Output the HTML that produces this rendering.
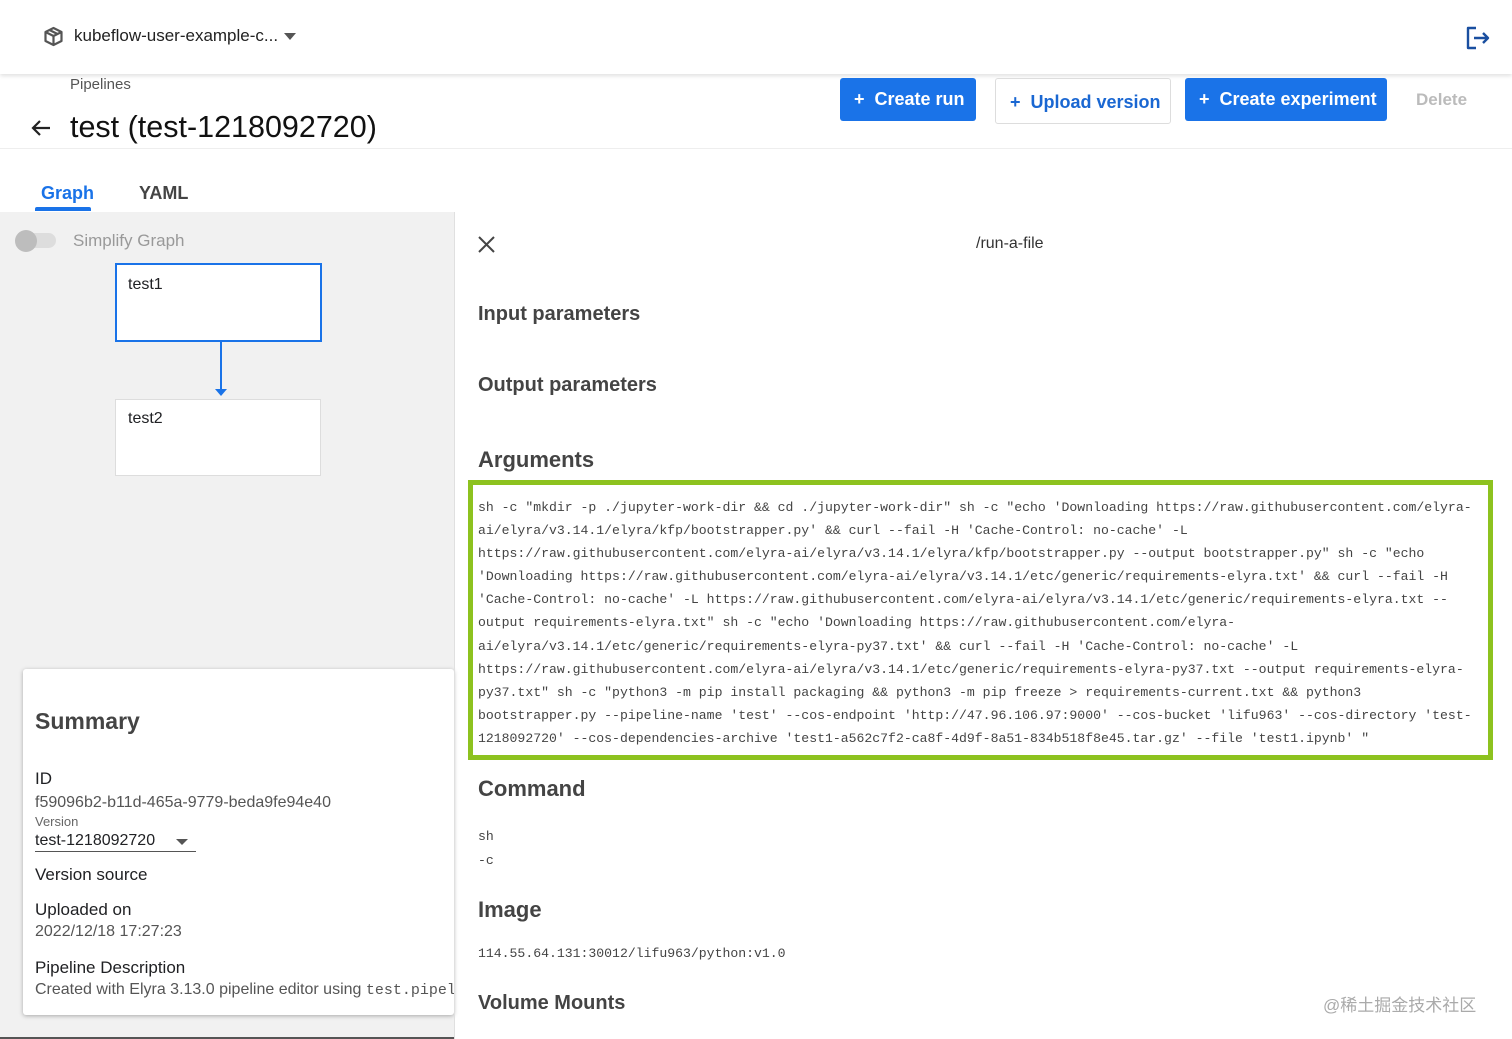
<!DOCTYPE html>
<html><head><meta charset="utf-8"><style>
*{box-sizing:border-box;margin:0;padding:0}
body{width:1512px;height:1039px;overflow:hidden;background:#fff;font-family:"Liberation Sans","Noto Sans CJK SC",sans-serif;position:relative;color:#202124}
.a{position:absolute;white-space:nowrap}
.btn{position:absolute;top:78px;height:43px;border-radius:3px;font-weight:bold;font-size:18px;line-height:43px;padding-left:14px}
.blue{background:#1a73e8;color:#fff}
.mono{font-family:"Liberation Mono","Noto Serif CJK SC",monospace;font-size:13.15px;color:#444;white-space:pre}
h3{position:absolute;font-size:21px;font-weight:bold;color:#444;white-space:nowrap}
</style></head><body>
<div class="a" style="left:0;top:0;width:1512px;height:74px;background:#fff;box-shadow:0 2px 4px rgba(0,0,0,.12)"></div>
<svg class="a" style="left:43px;top:26px" width="21" height="21" viewBox="0 0 21 21"><path d="M10.5 2 L18.5 6 V15 L10.5 19 L2.5 15 V6 Z M2.5 6 L10.5 10 L18.5 6 M10.5 10 V19 M6.5 4 L14.5 8" fill="none" stroke="#555" stroke-width="2.2" stroke-linejoin="round"/></svg>
<div class="a" style="left:74px;top:26px;font-size:17px;color:#222">kubeflow-user-example-c...</div>
<div class="a" style="left:284px;top:33px;width:0;height:0;border-left:6px solid transparent;border-right:6px solid transparent;border-top:7px solid #555"></div>
<svg class="a" style="left:1465px;top:25px" width="26" height="26" viewBox="0 0 26 26"><path d="M11 3 H3 V23 H11 M9 13 H23 M18 8 L23 13 L18 18" fill="none" stroke="#1a4fa0" stroke-width="2.4" stroke-linejoin="round"/></svg>
<div class="a" style="left:70px;top:76px;font-size:15px;color:#555">Pipelines</div>
<svg class="a" style="left:30px;top:118px" width="22" height="20" viewBox="0 0 22 20"><path d="M20 10 H3 M10 3 L3 10 L10 17" fill="none" stroke="#222" stroke-width="2.2"/></svg>
<div class="a" style="left:70px;top:110px;font-size:30.5px;color:#111">test (test-1218092720)</div>
<div class="btn blue" style="left:840px;width:136px">+ &nbsp;Create run</div>
<div class="btn" style="left:995px;width:176px;border:1px solid #ddd;color:#1a67d2;top:78px;height:46px;line-height:46px">+ &nbsp;Upload version</div>
<div class="btn blue" style="left:1185px;width:202px">+ &nbsp;Create experiment</div>
<div class="a" style="left:1416px;top:90px;font-size:17px;font-weight:bold;color:#bbb">Delete</div>
<div class="a" style="left:0;top:148px;width:1512px;height:1px;background:#eee"></div>
<div class="a" style="left:41px;top:183px;font-size:18px;font-weight:bold;color:#1a73e8">Graph</div>
<div class="a" style="left:35px;top:207px;width:56px;height:4px;border-radius:2px 2px 0 0;background:#1a73e8"></div>
<div class="a" style="left:139px;top:183px;font-size:18px;font-weight:bold;color:#444">YAML</div>
<div class="a" style="left:0;top:212px;width:454px;height:827px;background:#f1f1f1"></div>
<div class="a" style="left:18px;top:233px;width:38px;height:15px;border-radius:8px;background:#ddd"></div>
<div class="a" style="left:15px;top:230px;width:22px;height:22px;border-radius:50%;background:#bdbdbd"></div>
<div class="a" style="left:73px;top:231px;font-size:17px;color:#999">Simplify Graph</div>
<div class="a" style="left:115px;top:263px;width:207px;height:79px;background:#fff;border:2px solid #1a73e8"></div>
<div class="a" style="left:128px;top:276px;font-size:16px">test1</div>
<div class="a" style="left:220px;top:342px;width:2px;height:48px;background:#1a73e8"></div>
<div class="a" style="left:215px;top:389px;border-left:6px solid transparent;border-right:6px solid transparent;border-top:7px solid #1a73e8"></div>
<div class="a" style="left:115px;top:399px;width:206px;height:77px;background:#fff;border:1px solid #ddd"></div>
<div class="a" style="left:128px;top:410px;font-size:16px">test2</div>
<div class="a" style="left:23px;top:669px;width:431px;height:346px;background:#fff;box-shadow:0 1px 4px rgba(0,0,0,.3);border-radius:3px"></div>
<div class="a" style="left:35px;top:708px;font-size:23px;font-weight:bold;color:#444">Summary</div>
<div class="a" style="left:35px;top:769px;font-size:17px">ID</div>
<div class="a" style="left:35px;top:794px;font-size:16px;color:#555">f59096b2-b11d-465a-9779-beda9fe94e40</div>
<div class="a" style="left:35px;top:814px;font-size:13px;color:#666">Version</div>
<div class="a" style="left:35px;top:832px;font-size:16px">test-1218092720</div>
<div class="a" style="left:176px;top:839px;border-left:6px solid transparent;border-right:6px solid transparent;border-top:6px solid #555"></div>
<div class="a" style="left:35px;top:851px;width:161px;height:1px;background:#555"></div>
<div class="a" style="left:35px;top:865px;font-size:17px">Version source</div>
<div class="a" style="left:35px;top:900px;font-size:17px">Uploaded on</div>
<div class="a" style="left:35px;top:923px;font-size:16px;color:#555">2022/12/18 17:27:23</div>
<div class="a" style="left:35px;top:958px;font-size:17px">Pipeline Description</div>
<div class="a" style="left:35px;top:981px;font-size:16px;color:#555;width:419px;overflow:hidden">Created with Elyra 3.13.0 pipeline editor using <span style="font-family:'Liberation Mono',monospace;font-size:15px">test.pipeline</span></div>
<div class="a" style="left:454px;top:212px;width:1px;height:827px;background:#e0e0e0"></div>
<svg class="a" style="left:478px;top:236px" width="17" height="17" viewBox="0 0 17 17"><path d="M1 1 L16 16 M16 1 L1 16" stroke="#444" stroke-width="2"/></svg>
<div class="a" style="left:976px;top:235px;font-size:16px;color:#333">/run-a-file</div>
<h3 style="left:478px;top:303px;font-size:20px">Input parameters</h3>
<h3 style="left:478px;top:374px;font-size:20px">Output parameters</h3>
<h3 style="left:478px;top:447px;font-size:22px">Arguments</h3>
<div class="a" style="left:468px;top:480px;width:1025px;height:280px;border:5px solid #8dc21f"></div>
<div class="a mono" style="left:478px;top:496px;line-height:23.1px">sh -c "mkdir -p ./jupyter-work-dir &amp;&amp; cd ./jupyter-work-dir" sh -c "echo 'Downloading https://raw.githubusercontent.com/elyra-
ai/elyra/v3.14.1/elyra/kfp/bootstrapper.py' &amp;&amp; curl --fail -H 'Cache-Control: no-cache' -L
https://raw.githubusercontent.com/elyra-ai/elyra/v3.14.1/elyra/kfp/bootstrapper.py --output bootstrapper.py" sh -c "echo
'Downloading https://raw.githubusercontent.com/elyra-ai/elyra/v3.14.1/etc/generic/requirements-elyra.txt' &amp;&amp; curl --fail -H
'Cache-Control: no-cache' -L https://raw.githubusercontent.com/elyra-ai/elyra/v3.14.1/etc/generic/requirements-elyra.txt --
output requirements-elyra.txt" sh -c "echo 'Downloading https://raw.githubusercontent.com/elyra-
ai/elyra/v3.14.1/etc/generic/requirements-elyra-py37.txt' &amp;&amp; curl --fail -H 'Cache-Control: no-cache' -L
https://raw.githubusercontent.com/elyra-ai/elyra/v3.14.1/etc/generic/requirements-elyra-py37.txt --output requirements-elyra-
py37.txt" sh -c "python3 -m pip install packaging &amp;&amp; python3 -m pip freeze &gt; requirements-current.txt &amp;&amp; python3
bootstrapper.py --pipeline-name 'test' --cos-endpoint 'http://47.96.106.97:9000' --cos-bucket 'lifu963' --cos-directory 'test-
1218092720' --cos-dependencies-archive 'test1-a562c7f2-ca8f-4d9f-8a51-834b518f8e45.tar.gz' --file 'test1.ipynb' "</div>
<h3 style="left:478px;top:776px;font-size:22px">Command</h3>
<div class="a mono" style="left:478px;top:825px;line-height:24px">sh
-c</div>
<h3 style="left:478px;top:897px;font-size:22px">Image</h3>
<div class="a mono" style="left:478px;top:946px">114.55.64.131:30012/lifu963/python:v1.0</div>
<h3 style="left:478px;top:992px;font-size:20px">Volume Mounts</h3>
<div class="a" style="left:1323px;top:991px;font-size:17px;color:#aaa">@稀土掘金技术社区</div>
<div class="a" style="left:0;top:1037px;width:454px;height:2px;background:#555"></div>
</body></html>
